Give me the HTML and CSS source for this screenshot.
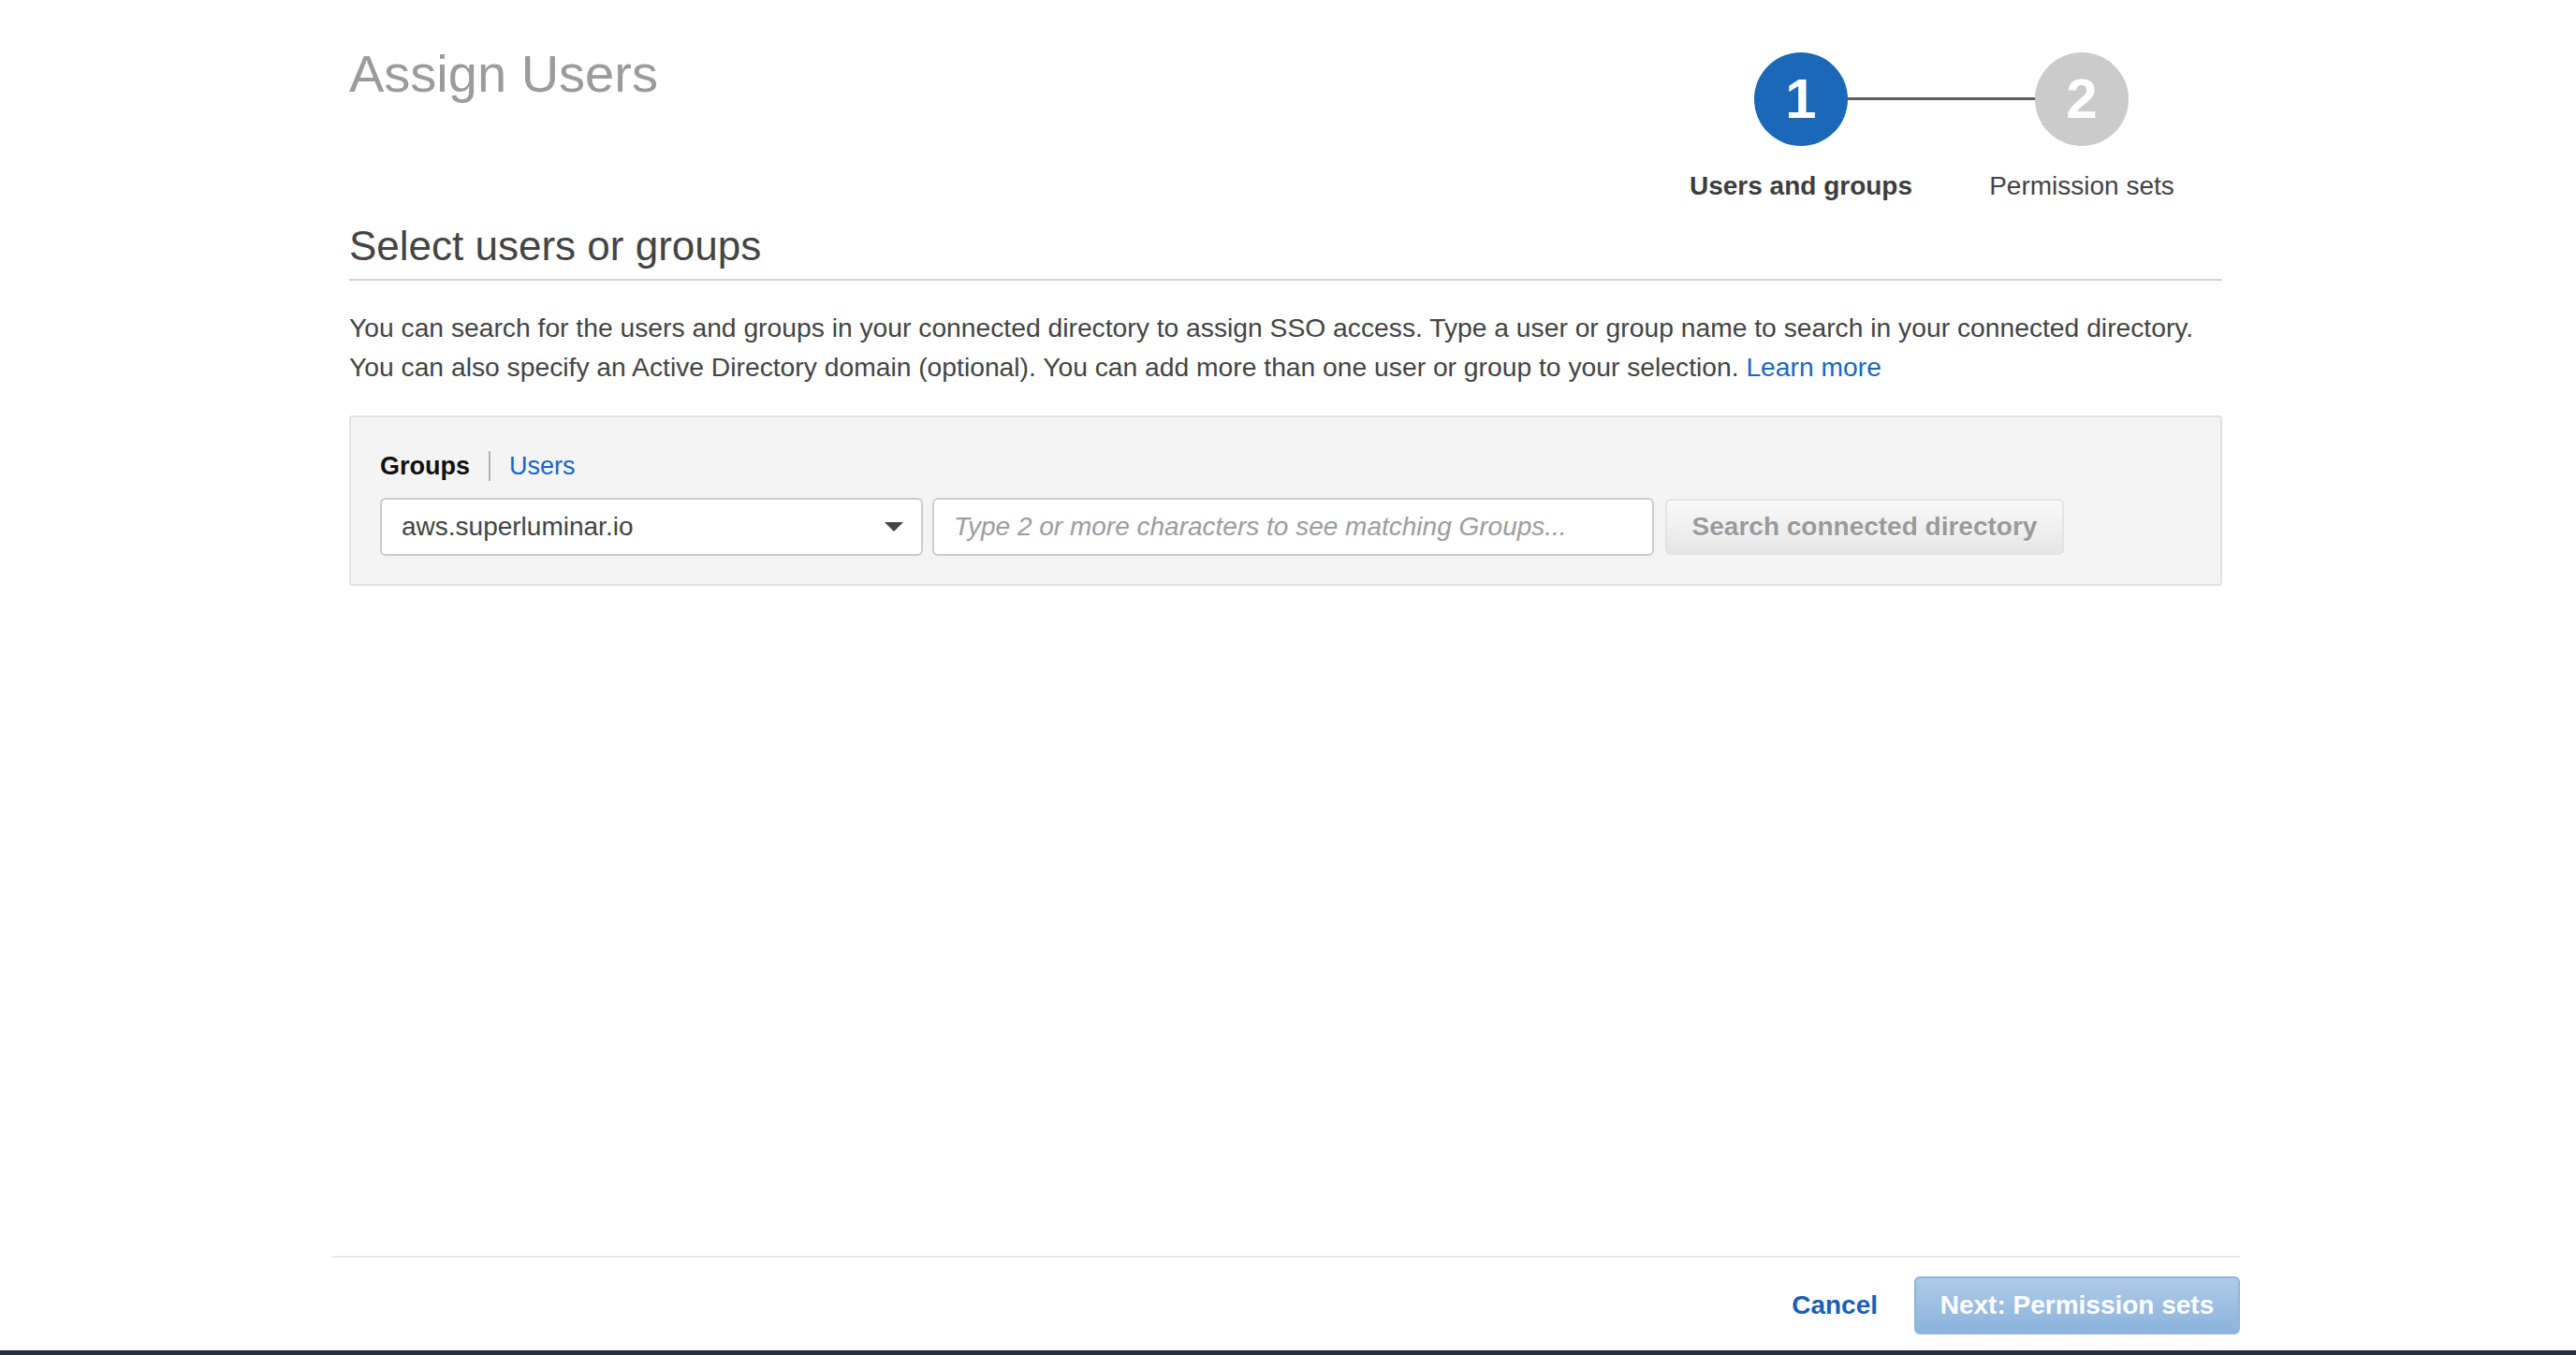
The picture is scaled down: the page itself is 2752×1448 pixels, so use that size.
FILE: index.html
```html
<!DOCTYPE html>
<html lang="en">
<head>
<meta charset="utf-8">
<title>Assign Users</title>
<link rel="stylesheet" href="styles.css">
</head>
<body>
<main class="page">
  <header class="header">
    <h1 class="title">Assign Users</h1>
    <ol class="stepper">
      <li class="step step-active">
        <span class="circle">1</span>
        <span class="step-label">Users and groups</span>
      </li>
      <li class="step">
        <span class="circle circle-idle">2</span>
        <span class="step-label">Permission sets</span>
      </li>
    </ol>
  </header>

  <h2 class="section-title">Select users or groups</h2>
  <p class="intro">You can search for the users and groups in your connected directory to assign SSO access. Type a user or group name to search in your connected directory.<br>You can also specify an Active Directory domain (optional). You can add more than one user or group to your selection. <a class="link" href="#">Learn more</a></p>

  <section class="panel">
    <div class="tabs">
      <span class="tab tab-active">Groups</span>
      <a class="tab tab-link" href="#">Users</a>
    </div>
    <div class="form-row">
      <div class="select">
        <span class="select-value">aws.superluminar.io</span>
        <span class="caret"></span>
      </div>
      <input class="search-input" type="text" placeholder="Type 2 or more characters to see matching Groups...">
      <button class="btn-search" type="button">Search connected directory</button>
    </div>
  </section>
</main>

<footer class="footer">
  <a class="cancel" href="#">Cancel</a>
  <button class="btn-next" type="button">Next: Permission sets</button>
</footer>
<div class="bottom-bar"></div>
</body>
</html>
```

FILE: styles.css
```css
* {
  box-sizing: border-box;
}

html, body {
  margin: 0;
  padding: 0;
  background: #ffffff;
}

body {
  font-family: "Liberation Sans", Arial, Helvetica, sans-serif;
  color: #444444;
  display: flex;
  flex-direction: column;
  min-height: 100vh;
}

.page {
  flex: 1;
  width: 2001px;
  margin-left: 373px;
}

.header {
  display: flex;
  justify-content: space-between;
  align-items: flex-start;
}

.title {
  margin: 47px 0 0;
  font-size: 56px;
  line-height: 64px;
  font-weight: normal;
  color: #9b9b9b;
}

.stepper {
  list-style: none;
  margin: 56px 0 0;
  padding: 0;
  display: flex;
  position: relative;
}

.stepper::before {
  content: "";
  position: absolute;
  top: 48px;
  left: 150px;
  width: 300px;
  height: 3px;
  background: #5c5c5c;
}

.step {
  width: 300px;
  display: flex;
  flex-direction: column;
  align-items: center;
  position: relative;
}

.circle {
  width: 100px;
  height: 100px;
  border-radius: 50%;
  background: #1b67b8;
  color: #ffffff;
  font-weight: bold;
  font-size: 60px;
  line-height: 100px;
  text-align: center;
}

.circle-idle {
  background: #cbcbcb;
}

.step-label {
  margin-top: 27px;
  font-size: 28px;
  line-height: 32px;
  color: #444444;
  white-space: nowrap;
}

.step-active .step-label {
  font-weight: bold;
  color: #3d3d3d;
}

.section-title {
  margin: 22px 0 0;
  font-size: 44px;
  line-height: 52px;
  font-weight: normal;
  color: #444444;
  padding-bottom: 9px;
  border-bottom: 2px solid #d2d2d2;
}

.intro {
  margin: 29px 0 31px;
  font-size: 28.25px;
  line-height: 42px;
  color: #444444;
}

.link {
  color: #1b66c0;
  text-decoration: none;
}

.panel {
  background: #f4f4f4;
  border: 2px solid #e2e2e2;
  border-radius: 3px;
  padding: 36px 30px 30px 31px;
}

.tabs {
  display: flex;
  align-items: center;
  font-size: 27px;
  line-height: 32px;
}

.tab-active {
  font-weight: bold;
  color: #111111;
  padding-right: 20px;
}

.tab-link {
  color: #1b66c0;
  text-decoration: none;
  border-left: 2px solid #b4b4b4;
  padding-left: 20px;
}

.form-row {
  margin-top: 18px;
  display: flex;
  align-items: center;
}

.select {
  width: 580px;
  height: 62px;
  background: #ffffff;
  border: 2px solid #cdcdcd;
  border-radius: 6px;
  padding: 0 19px 0 21px;
  display: flex;
  align-items: center;
  justify-content: space-between;
  font-size: 28px;
  color: #444444;
}

.caret {
  width: 0;
  height: 0;
  border-left: 10px solid transparent;
  border-right: 10px solid transparent;
  border-top: 10px solid #444444;
}

.search-input {
  margin-left: 10px;
  width: 771px;
  height: 62px;
  background: #ffffff;
  border: 2px solid #cdcdcd;
  border-radius: 6px;
  padding: 0 21px;
  font-family: "Liberation Sans", Arial, Helvetica, sans-serif;
  font-size: 28px;
  color: #444444;
  outline: none;
}

.search-input::placeholder {
  color: #9d9d9d;
  font-style: italic;
}

.btn-search {
  margin-left: 12px;
  width: 426px;
  height: 60px;
  border: 2px solid #e3e3e3;
  border-radius: 6px;
  background: linear-gradient(#f9f9f9, #e6e6e6);
  color: #9a9a9a;
  font-family: "Liberation Sans", Arial, Helvetica, sans-serif;
  font-weight: bold;
  font-size: 28px;
  padding: 0;
  text-shadow: 0 1px 0 #ffffff;
}

.footer {
  width: 2039px;
  margin-left: 354px;
  border-top: 2px solid #eaeaea;
  padding: 20px 0 17px;
  display: flex;
  justify-content: flex-end;
  align-items: center;
}

.cancel {
  color: #1a5fb4;
  font-weight: bold;
  font-size: 28px;
  text-decoration: none;
  margin-right: 39px;
}

.btn-next {
  width: 348px;
  height: 62px;
  border: 2px solid #90b4da;
  border-radius: 6px;
  background: linear-gradient(#aecbe8, #8cb3db);
  color: #ffffff;
  font-family: "Liberation Sans", Arial, Helvetica, sans-serif;
  font-weight: bold;
  font-size: 28px;
  padding: 0;
}

.bottom-bar {
  height: 5px;
  background: #232f3e;
}
```
